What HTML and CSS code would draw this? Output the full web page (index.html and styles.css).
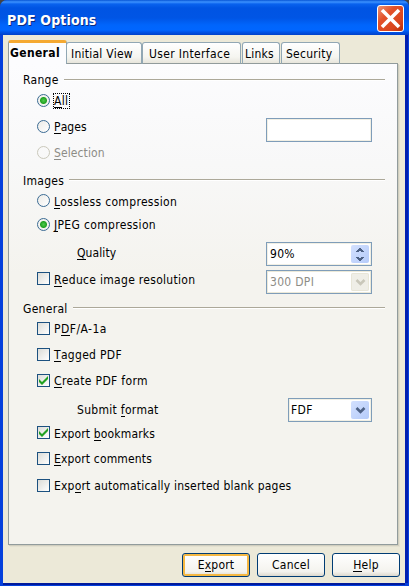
FILE: index.html
```html
<!DOCTYPE html>
<html lang="en">
<head>
<meta charset="utf-8">
<title>PDF Options</title>
<link rel="stylesheet" href="styles.css">
</head>
<body>
<div class="window">
  <header class="titlebar">
    <h1>PDF Options</h1>
    <button class="close" aria-label="Close"><svg width="21" height="21" viewBox="0 0 21 21"><path d="M2 2L19 19M19 2L2 19" stroke="#fff" stroke-width="3.6"/></svg></button>
  </header>
  <main class="client">
    <nav class="tabs">
      <div class="tab active">General</div>
      <div class="tab initial">Initial View</div>
      <div class="tab interface">User Interface</div>
      <div class="tab links">Links</div>
      <div class="tab security">Security</div>
    </nav>
    <section class="panel">
      <div class="row heading first"><span class="t-range">Range</span></div>
      <div class="row g1"><i class="radio on"></i><span class="focus"><u>A</u>ll</span></div>
      <div class="row g7 field-row"><label class="label"><i class="radio"></i><span class="t-pages"><u>P</u>ages</span></label><div class="field"></div></div>
      <div class="row g1 disabled"><i class="radio"></i><span class="t-selection"><u>S</u>election</span></div>
      <div class="row heading g7"><span class="t-images">Images</span></div>
      <div class="row g1"><i class="radio"></i><span class="t-lossless"><u>L</u>ossless compression</span></div>
      <div class="row g4"><i class="radio on"></i><span class="t-jpeg"><u>J</u>PEG compression</span></div>
      <div class="row g7 field-row sub"><label class="label"><span class="t-quality"><u>Q</u>uality</span></label>
        <div class="field"><span>90%</span><b class="spin"><svg width="18" height="18" viewBox="0 0 18 18" shape-rendering="crispEdges"><path d="M8 3h2v1h1v1h1v1h1v1h-3v-1h-2v1H5v-1h1v-1h1v-1h1zM5 12h3v1h2v-1h3v1h-1v1h-1v1h-1v1H8v-1H7v-1H6v-1H5z" fill="#4d6185"/></svg></b></div></div>
      <div class="row g4 field-row reduce"><label class="label"><i class="check"></i><span class="t-reduce"><u>R</u>educe image resolution</span></label>
        <div class="field off"><span>300 DPI</span><b class="spin"><svg width="18" height="18" viewBox="0 0 18 18"><path d="M5.5 7L9.5 11L13.5 7" fill="none" stroke="#c9c7ba" stroke-width="2.6"/></svg></b></div></div>
      <div class="row heading g4"><span class="t-general">General</span></div>
      <div class="row"><i class="check"></i><span class="t-pdfa">P<u>D</u>F/A-1a</span></div>
      <div class="row g6"><i class="check"></i><span class="t-tagged"><u>T</u>agged PDF</span></div>
      <div class="row g6"><i class="check"><svg width="11" height="11" viewBox="0 0 11 11"><path d="M1 4L4 7L10 1V4L4 10L1 7Z" fill="#21a121"/></svg></i><span class="t-create"><u>C</u>reate PDF form</span></div>
      <div class="row g8 field-row sub"><label class="label"><span class="t-submit">Submit <u>f</u>ormat</span></label>
        <div class="field small"><span>FDF</span><b class="spin"><svg width="18" height="18" viewBox="0 0 18 18"><path d="M5.5 7L9.5 11L13.5 7" fill="none" stroke="#4d6185" stroke-width="2.6"/></svg></b></div></div>
      <div class="row"><i class="check"><svg width="11" height="11" viewBox="0 0 11 11"><path d="M1 4L4 7L10 1V4L4 10L1 7Z" fill="#21a121"/></svg></i><span class="t-bookmarks">Export <u>b</u>ookmarks</span></div>
      <div class="row g6"><i class="check"></i><span class="t-comments"><u>E</u>xport comments</span></div>
      <div class="row g7"><i class="check"></i><span class="t-auto">Exp<u>o</u>rt automatically inserted blank pages</span></div>
    </section>
    <footer class="actions">
      <button class="btn default">E<u>x</u>port</button>
      <button class="btn">Cancel</button>
      <button class="btn help"><u>H</u>elp</button>
    </footer>
  </main>
</div>
</body>
</html>
```
FILE: styles.css
```css
* { box-sizing: border-box; }
body { margin: 0; background: #444; font: 12px/20px "DejaVu Sans Condensed", "DejaVu Sans", sans-serif; font-stretch: condensed; color: #000; }
u { text-decoration: none; border-bottom: 1px solid currentColor; display: inline-block; line-height: 12px; height: 13px; }
.window { width: 409px; height: 586px; display: flex; flex-direction: column; background: #0540dc; border-radius: 7px 7px 0 0; overflow: hidden; }
.titlebar { height: 35px; flex: none; display: flex; justify-content: space-between; padding: 5px 5px 0 7px; background: linear-gradient(#0755d5 0, #3c92ff 2px, #0962ee 4px, #0054e3 8px, #0055e5 18px, #0065fc 25px, #0066ff 30px, #0054e8 32px, #0040c8 35px); }
.titlebar h1 { margin: 0; color: #fff; font: bold 14px/30px "DejaVu Sans Condensed", "DejaVu Sans", sans-serif; letter-spacing: .15px; text-shadow: 1px 1px #092b82; }
.close { width: 27px; height: 27px; padding: 0; display: grid; place-items: center; border: 1px solid #fff; border-radius: 3px; background: linear-gradient(135deg, #ee9474, #e2512a 35%, #d9451c 75%, #b72c06); }
.client { flex: 1; margin: 0 4px 3px 3px; background: #ece9d8; padding: 5px 7px 0 5px; box-shadow: 3px 0 0 #001fb0, 0 2px 0 #001a9c; display: flex; flex-direction: column; }
.tabs { display: flex; align-items: flex-end; height: 24px; padding-right: 50px; position: relative; z-index: 1; }
.tab { height: 22px; border: 1px solid #91a7b4; border-bottom: 1px solid #919b9c; border-radius: 3px 3px 0 0; background: linear-gradient(#fff, #f5f5f0 70%, #e7e5dc); padding: 2px 0 0 4px; line-height: 19px; white-space: nowrap; margin-right: 1px; letter-spacing: .25px; }
.tab.active { width: 59px; height: 24px; border: 1px solid #919b9c; border-top: 3px solid #f5a932; border-bottom: 0; background: #fcfcfe; font-weight: bold; padding: 1px 0 0 1px; margin-right: -1px; letter-spacing: .35px; }
.tab.initial { width: 76px; margin-right: 0; }
.tab.interface { width: 99px; padding-left: 6px; letter-spacing: .35px; }
.tab.links { width: 38px; padding-left: 2px; }
.tab.security { width: 59px; padding-left: 4px; }
.panel { height: 482px; margin-top: -1px; border: 1px solid #919b9c; background: linear-gradient(#fcfcfe, #f8f8f8 100px, #f4f3ee 210px, #f4f3ee); box-shadow: 1px 1px #d0cebf, 2px 2px #e3e0d0; padding: 6px 12px 0 14px; }
.row { height: 20px; display: flex; align-items: center; padding-left: 14px; white-space: nowrap; letter-spacing: .3px; }
.g1 { margin-top: 1px; } .g4 { margin-top: 4px; } .g6 { margin-top: 6px; } .g7 { margin-top: 7px; } .g8 { margin-top: 8px; }
.heading { padding-left: 0; }
.heading::after { content: ""; flex: 1; height: 1px; margin-left: 5px; background: #aca899; border-bottom: 1px solid #fff; }
.field-row { height: 24px; align-items: flex-start; justify-content: space-between; padding-right: 13px; }
.label { display: flex; align-items: center; height: 18px; }
.sub { padding-left: 54px; }
.sub .label { height: 22px; }
.reduce .label { height: 16px; }
.t-pages, .t-quality { letter-spacing: .1px; }
.t-selection { letter-spacing: .1px; }
.t-lossless, .t-jpeg, .t-create { letter-spacing: .33px; }
.t-pdfa { letter-spacing: .45px; }
.t-bookmarks, .t-comments { letter-spacing: .15px; }
.t-auto { letter-spacing: .2px; }
.t-pdfa, .t-tagged, .t-create, .t-submit, .t-bookmarks, .t-comments, .t-general, .t-lossless, .t-auto, .t-images { margin-bottom: -2px; }
.t-bookmarks, .t-reduce { margin-bottom: -4px; }
.radio, .check { flex: none; width: 13px; height: 13px; margin-right: 4px; border: 1px solid #1c5180; background: linear-gradient(135deg, #dcdcd7, #fff); display: block; }
.check { margin-top: 1px; }
.radio { margin-bottom: 1px; border-radius: 50%; border-color: #3b6b94; background: linear-gradient(135deg, #ecebe7, #fff); }
.radio.on { background: radial-gradient(circle, #4fca4c 0, #21a121 3px, #f3f3ef 4px); }
.disabled { color: #8d8c86; }
.disabled .radio { border-color: #cac8bb; background: none; }
.check svg { display: block; }
.focus { outline: 1px dotted #000; line-height: 14px; padding-right: 1px; }
.field { width: 106px; height: 24px; background: #fff; border: 1px solid #7f9db9; box-shadow: inset 0 0 0 1px #f1efe4; display: flex; align-items: center; justify-content: space-between; padding: 0 2px 0 3px; }
.field.small { width: 84px; padding-left: 2px; }
.field.off { color: #8d8c86; box-shadow: inset 0 0 0 1px #ece9d8; }
.spin { width: 18px; height: 18px; border-radius: 2px; background: linear-gradient(135deg, #d3e0fe, #b5cbfa); }
.spin svg { display: block; }
.off .spin { background: #efeee7; box-shadow: inset 0 0 0 1px #e8e6d8; }
.actions { display: flex; justify-content: flex-end; gap: 7px; margin: 8px -2px 0 0; }
.btn { width: 68px; height: 24px; padding: 0; border: 1px solid #003c74; border-radius: 3px; background: linear-gradient(#fff, #f4f3ee 80%, #dcd8cd); font: inherit; letter-spacing: .2px; color: #000; }
.btn.default { box-shadow: inset 0 0 0 2px #f5b843; }
```
